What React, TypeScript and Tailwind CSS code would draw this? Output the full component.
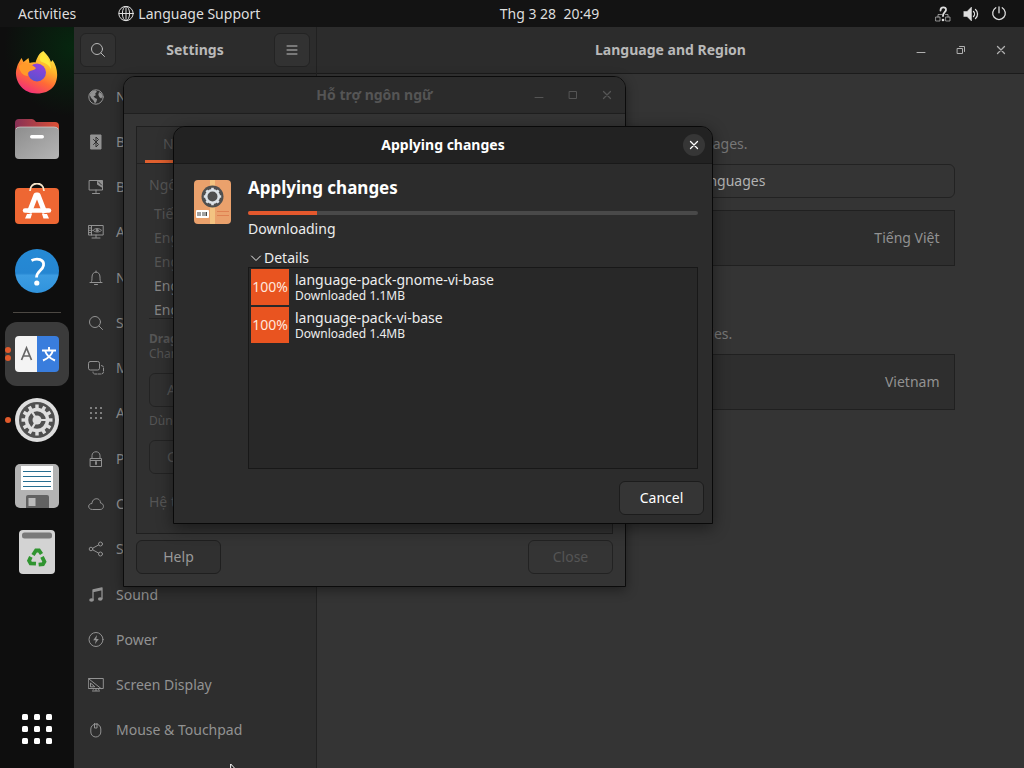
import type { ReactNode } from "react";

function Icon({ children, className = "size-4" }: { children: ReactNode; className?: string }) {
  return (
    <svg viewBox="0 0 16 16" fill="none" stroke="currentColor" strokeWidth="1" strokeLinecap="round" strokeLinejoin="round" className={`shrink-0 ${className}`} aria-hidden="true">
      {children}
    </svg>
  );
}

const search = (
  <>
    <circle cx="7" cy="7" r="5.5" />
    <path d="M11 11l3.5 3.5" />
  </>
);

const sections: { label: string; icon: ReactNode }[] = [
  {
    label: "Network",
    icon: (
      <>
        <circle cx="8" cy="8" r="7.2" />
        <path d="M1.5 5.5L4 2.2l3.5-1L9 2.8 7.2 4.4l.6 1.8L5.5 7.5l1.6 1.6 2 .9-.6 2.5L7 14.5l-1.5-3-2.4-2.4z M11 3l2.6 1.4 1.1 3-1.6 2.2-1.8-1.7-1-2.2z" fill="currentColor" stroke="none" />
      </>
    ),
  },
  {
    label: "Bluetooth",
    icon: (
      <>
        <path d="M3 1h10v14H3z" fill="currentColor" stroke="currentColor" />
        <path d="M5.500 5.500l5 5L8 13V3l2.500 2.500-5 5" stroke="#2e2e2e" />
      </>
    ),
  },
  {
    label: "Background",
    icon: (
      <>
        <path d="M1.500 1.500h13v9.500h-13zM8 11v2.500M4.500 14.500h7" />
        <path d="M9 1.500v4l5.500 3.500V1.500z" fill="currentColor" stroke="none" />
        <path d="M10.500 3l3 3" stroke="#2e2e2e" />
      </>
    ),
  },
  {
    label: "Appearance",
    icon: (
      <>
        <path d="M.8 1.500h14.400v9.500H.8zM3.500 1.500v9.500M8 11v2.500M4 14h8M1 4h2M1 6.300h2M1 8.600h2" />
        <path d="M5 6.300c1.500-2.300 6.500-2.300 8.500 0-2 2.300-7 2.300-8.500 0z" />
        <circle cx="9.200" cy="6.300" r="1" fill="currentColor" />
      </>
    ),
  },
  {
    label: "Notifications",
    icon: <path d="M8 1v1M2 12.500h12M3 12.500c1-1.500 1-2.500 1-5.500 0-6.500 8-6.500 8 0 0 3 0 4 1 5.500M6.500 14.500h3" />,
  },
  { label: "Search", icon: search },
  {
    label: "Multitasking",
    icon: (
      <>
        <rect x="0.500" y="1.500" width="11" height="8.500" rx="1.800" />
        <path d="M13.500 5.500q2 0 2 2v4.500q0 2-2 2H7q-2 0-2-2" strokeDasharray="2.500 1.200" />
      </>
    ),
  },
  {
    label: "Applications",
    icon: <path d="M3 3h0M8 3h0M13 3h0M3 8h0M8 8h0M13 8h0M3 13h0M8 13h0M13 13h0" strokeWidth="2.200" />,
  },
  {
    label: "Privacy",
    icon: (
      <>
        <path d="M2.500 7.500h11v8h-11zM4 7.500V4.500c0-5 8-5 8 0v3M2.500 9.500h11" />
        <path d="M8 11v2" strokeWidth="1.800" />
      </>
    ),
  },
  {
    label: "Online Accounts",
    icon: <path d="M4 13.500c-4.500 0-4.500-6 0-6 0-6 8.500-6.500 8.500-.5 4 .5 4 6.500 0 6.500z" />,
  },
  {
    label: "Sharing",
    icon: (
      <>
        <circle cx="3" cy="8" r="1.800" />
        <circle cx="12.500" cy="3" r="2" />
        <circle cx="12.500" cy="13" r="2" />
        <path d="M5 7l5.500-3M5 9l5.500 3" />
      </>
    ),
  },
  {
    label: "Sound",
    icon: (
      <>
        <path d="M5 13V3l9-2v10.500M5 4.500l9-2" strokeWidth="1.300" />
        <ellipse cx="3.500" cy="13" rx="2.300" ry="1.800" fill="currentColor" stroke="none" />
        <ellipse cx="12.200" cy="12" rx="2.300" ry="1.800" fill="currentColor" stroke="none" />
      </>
    ),
  },
  {
    label: "Power",
    icon: (
      <>
        <circle cx="8" cy="7.500" r="7" />
        <path d="M9 3L5.200 8.200h2.500L7 12l3.800-5H8.300z" fill="currentColor" stroke="none" />
      </>
    ),
  },
  {
    label: "Screen Display",
    icon: (
      <>
        <path d="M.7 1.500h14.600v10H.7zM8 11.500v2M4.500 14h7M1 2l12 9.500" />
        <path d="M2.500 9.500V6l4 3.500zM5 12.500l1-1h4l1 1.500" />
      </>
    ),
  },
  {
    label: "Mouse & Touchpad",
    icon: (
      <>
        <rect x="2.800" y="2" width="10" height="13" rx="5" />
        <path d="M6.500 1.500v4.500h2.500V1.500" />
      </>
    ),
  },
];

function Minimize() {
  return (
    <Icon>
      <path d="M4 10.500h8" />
    </Icon>
  );
}

function Cross({ className }: { className?: string }) {
  return (
    <Icon className={className}>
      <path d="M4.500 4.500l7 7M11.500 4.500l-7 7" strokeWidth="1.300" />
    </Icon>
  );
}

function TopBar() {
  return (
    <header className="grid h-[27px] shrink-0 grid-cols-[1fr_auto_1fr] items-center bg-[#131313] text-sm text-[#dedede]">
      <div className="flex items-center gap-[42px] pl-[18px]">
        <button type="button">Activities</button>
        <button type="button" className="flex items-center gap-1">
          <Icon>
            <circle cx="8" cy="7.500" r="7.200" />
            <ellipse cx="8" cy="7.500" rx="3.600" ry="7.200" />
            <path d="M8 .5v14M1 7.500h14" />
          </Icon>
          Language Support
        </button>
      </div>
      <button type="button" className="pl-[75px]">Thg 3 28&nbsp; 20:49</button>
      <div className="flex items-center justify-end gap-3 pr-[17px]">
        <Icon>
          <g opacity=".6">
            <path d="M1 11h4v4H1zM11 11h4v4h-4zM3 11V8.500h3.500M13 11V8.500h-2.500" />
          </g>
          <path d="M5.500 4.500c0-4 6-4 5.500-.5-.3 2.300-3 2.500-3 6" strokeWidth="1.800" />
          <circle cx="8" cy="14" r="1.300" fill="currentColor" stroke="none" />
        </Icon>
        <Icon>
          <path d="M1 5.500h3L8.500 1v14L4 10.500H1z" fill="currentColor" strokeWidth=".5" />
          <path d="M10.500 5.500c1.300 1.300 1.300 3.700 0 5M12.500 3.500c2.700 2.300 2.700 6.700 0 9" strokeWidth="1.300" />
        </Icon>
        <Icon>
          <path d="M8 .8v6M4.800 1.800a6.300 6.300 0 1 0 6.400 0" strokeWidth="1.300" />
        </Icon>
      </div>
    </header>
  );
}

function Firefox() {
  return (
    <svg viewBox="0 0 44 46" className="h-[46px] w-11" aria-hidden="true">
      <defs>
        <linearGradient id="fire" x1=".8" y1="0" x2=".3" y2="1">
          <stop offset="0" stopColor="#fff44f" />
          <stop offset=".35" stopColor="#ffb52a" />
          <stop offset=".65" stopColor="#ff6a36" />
          <stop offset="1" stopColor="#f02d7c" />
        </linearGradient>
        <linearGradient id="globe" x1=".7" y1="0" x2=".3" y2="1">
          <stop offset="0" stopColor="#9641dc" />
          <stop offset="1" stopColor="#5951cf" />
        </linearGradient>
      </defs>
      <path d="M28.300 1C32 5 35 8 36 12l1.500-2C46 22 44 43.500 22 43.500 5 43.500-2 27 2 17c1-4 3-6 4.500-9l2 4 5-4 1 5c2-.5 4-1 6-.5C22 8 24 3 28.300 1z" fill="url(#fire)" />
      <circle cx="22" cy="22.500" r="9" fill="url(#globe)" />
      <path d="M4 16c4-4 8-3 11-1 2-.5 4 1 6 3-1 2-4 2-6 3-2 1-3 3-2 5-5 0-9-5-9-10z" fill="#ff9a29" />
      <path d="M28 3c5 5 8 10 8 16-2-4-5-6-9-7-3-1-3-6 1-9z" fill="#ffe93c" />
    </svg>
  );
}

function Files() {
  return (
    <svg viewBox="0 0 44 42" className="h-[42px] w-11" aria-hidden="true">
      <defs>
        <linearGradient id="folder" x1="0" x2="1">
          <stop offset="0" stopColor="#873055" />
          <stop offset="1" stopColor="#dc5136" />
        </linearGradient>
        <linearGradient id="front" x1="0" y1="0" x2="1" y2="1">
          <stop offset="0" stopColor="#8d8d8d" />
          <stop offset="1" stopColor="#b5b5b5" />
        </linearGradient>
      </defs>
      <path d="M0 15V5q0-4 4-4h13q2 0 4 3h19q4 0 4 4v8z" fill="url(#folder)" />
      <rect y="9" width="44" height="32" rx="4" fill="url(#front)" />
      <path d="M1 11q1-2 4-2h34q3 0 4 2" stroke="#d7d0cd" strokeWidth=".7" fill="none" />
      <rect x="15" y="17" width="14" height="3.500" rx="1.700" fill="#fff" />
    </svg>
  );
}

function Software() {
  return (
    <svg viewBox="0 0 44 44" className="size-11" aria-hidden="true">
      <rect y="5" width="44" height="36" rx="4" fill="#ee6733" />
      <path d="M15 8c0-10 14-10 14 0" stroke="#f7e6cc" strokeWidth="1.800" fill="none" />
      <path d="M14 30l7-18h2l7 18" fill="none" stroke="#fff" strokeWidth="5" strokeLinejoin="round" />
      <path d="M10 27.500h24" stroke="#fff" strokeWidth="4.500" strokeLinecap="round" />
      <path d="M12 31h5l-1.500 4.500H10zM27 31h5l2 4.500h-5.500z" fill="#fff" />
    </svg>
  );
}

function Help() {
  return (
    <svg viewBox="0 0 44 44" className="size-11" aria-hidden="true">
      <defs>
        <linearGradient id="ask" x1="0" y1="0" x2="0" y2="1">
          <stop offset="0" stopColor="#258ad5" />
          <stop offset=".55" stopColor="#2586d2" />
          <stop offset=".6" stopColor="#3c9ce2" />
          <stop offset="1" stopColor="#3093dd" />
        </linearGradient>
      </defs>
      <circle cx="22" cy="22" r="22" fill="url(#ask)" />
      <path d="M16.500 11.500c6-3 13-1 12 5-.8 5-7 5.500-7 12" fill="none" stroke="#fff" strokeWidth="2.800" />
      <circle cx="21.800" cy="34" r="2.600" fill="#fff" />
    </svg>
  );
}

function Translate() {
  return (
    <svg viewBox="0 0 44 36" className="h-9 w-11" aria-hidden="true">
      <path d="M4 0h18v36H4q-4 0-4-4V4q0-4 4-4z" fill="#f4f4f4" />
      <path d="M22 0h18q4 0 4 4v28q0 4-4 4H22z" fill="#397ddd" />
      <path d="M6.500 24l5-12 5 12M8.300 20h6.500" fill="none" stroke="#666" strokeWidth="1.700" />
      <path d="M27 14.500h14M34 11v3.500M38 14.500c-1.500 5-5 8-10 10M30 14.500c1.500 5 5 8 10 10" fill="none" stroke="#fff" strokeWidth="1.900" />
    </svg>
  );
}

const spokes = [0, 30, 60, 90, 120, 150, 180, 210, 240, 270, 300, 330];

function Gear() {
  return (
    <svg viewBox="0 0 44 44" className="size-11" aria-hidden="true">
      <circle cx="22" cy="22" r="22" fill="#dedede" />
      <circle cx="22" cy="22" r="18" fill="#505050" />
      <g fill="none" stroke="#dedede">
        <circle cx="22" cy="22" r="10.500" strokeWidth="3.500" />
        {spokes.map((a) => (
          <path key={a} d="M22 10.500V6.500" strokeWidth="3.400" transform={`rotate(${a} 22 22)`} />
        ))}
        <path d="M22 22h11M22 22l-6-10M22 22l-6 10" strokeWidth="2.200" />
      </g>
      <circle cx="22" cy="22" r="4.500" fill="#dedede" />
    </svg>
  );
}

function Floppy() {
  return (
    <svg viewBox="0 0 44 44" className="size-11" aria-hidden="true">
      <rect width="44" height="44" rx="5" fill="#b3b3b3" />
      <path d="M6 2h32v24H6z" fill="#fff" />
      <path d="M8 7.500h28M8 12.500h28M8 17.500h28M8 22.500h28" stroke="#266e91" strokeWidth="1.200" />
      <path d="M11 44V33q0-2 2-2h19q2 0 2 2v11z" fill="#626262" />
      <rect x="13.500" y="34" width="7" height="8" fill="#bbb" />
    </svg>
  );
}

function Trash() {
  return (
    <svg viewBox="0 0 36 44" className="h-11 w-9" aria-hidden="true">
      <rect width="36" height="44" rx="4" fill="#d3d3d3" />
      <rect x="3" y="2.500" width="30" height="6" rx="2.500" fill="#797979" />
      <g fill="none" stroke="#2f942f" strokeWidth="3.800">
        <path d="M14 25l3-4.500h3l2.500 3.500" />
        <path d="M14 25l3-4.500h3l2.500 3.500" transform="rotate(120 18 28.500)" />
        <path d="M14 25l3-4.500h3l2.500 3.500" transform="rotate(240 18 28.500)" />
      </g>
    </svg>
  );
}

function DockItem({ label, children, active, dots = 0 }: { label: string; children: ReactNode; active?: boolean; dots?: number }) {
  return (
    <button type="button" aria-label={label} className={`relative grid size-16 shrink-0 place-items-center rounded-xl ${active ? "bg-[#3b3b3b]" : ""}`}>
      {children}
      {dots > 0 && (
        <span className="absolute inset-y-0 left-0 flex flex-col justify-center gap-0.5">
          {Array.from({ length: dots }, (_, i) => (
            <span key={i} className="size-1.5 rounded-full bg-[#e05a2b]" />
          ))}
        </span>
      )}
    </button>
  );
}

function Dock() {
  return (
    <nav aria-label="Dock" className="flex w-[74px] shrink-0 flex-col items-center bg-[#0e0e0e] bg-[radial-gradient(circle_at_100%_20px,#06270f_0,#0e0e0e_70px)] pb-[7px]">
      <div className="flex flex-col items-center gap-0.5 pt-[14px]">
        <DockItem label="Firefox"><Firefox /></DockItem>
        <DockItem label="Files"><Files /></DockItem>
        <DockItem label="Software"><Software /></DockItem>
        <DockItem label="Help"><Help /></DockItem>
      </div>
      <span className="my-[9px] h-px w-12 shrink-0 bg-[#4c4843]" />
      <div className="flex flex-col items-center gap-0.5">
        <DockItem label="Language Support" active dots={2}><Translate /></DockItem>
        <DockItem label="Settings" dots={1}><Gear /></DockItem>
        <DockItem label="Save"><Floppy /></DockItem>
        <DockItem label="Trash"><Trash /></DockItem>
      </div>
      <div className="mt-auto">
        <DockItem label="Show Applications">
          <svg viewBox="0 0 30 30" className="size-[30px]" fill="#fff" aria-hidden="true">
            {[0, 12, 24].map((y) => [0, 12, 24].map((x) => <rect key={`${x}-${y}`} x={x} y={y} width="6" height="6" rx="1.500" />))}
          </svg>
        </DockItem>
      </div>
    </nav>
  );
}

function Sidebar() {
  return (
    <aside className="flex w-[243px] shrink-0 flex-col border-r border-[#212121] bg-[#2e2e2e]">
      <div className="flex h-[47px] shrink-0 items-center justify-between border-b border-[#1b1b1b] bg-[#2c2c2c] px-1.5">
        <button type="button" aria-label="Search" className="grid size-9 h-[34px] place-items-center rounded-md border border-[#232323] bg-[#313131] text-[#b8b8b8]">
          <Icon>{search}</Icon>
        </button>
        <h2 className="text-sm font-bold text-[#b9b9b9]">Settings</h2>
        <button type="button" aria-label="Menu" className="grid size-9 h-[34px] place-items-center rounded-md border border-[#232323] bg-[#323232] text-[#c0c0c0]">
          <Icon><path d="M3 4h10M3 8h10M3 12h10" /></Icon>
        </button>
      </div>
      <ul className="grid min-h-0 flex-1 auto-rows-fr pb-[15px] text-sm text-[#929292]">
        {sections.map((s) => (
          <li key={s.label} className="flex min-h-0">
            <a href="#" className="flex flex-1 items-center gap-3 pl-[14px]">
              <Icon>{s.icon}</Icon>
              {s.label}
            </a>
          </li>
        ))}
      </ul>
    </aside>
  );
}

function Region({ title, note, action, name, value }: { title: string; note: string; action?: string; name: string; value: string }) {
  return (
    <section className="flex flex-col">
      <h3 className="font-bold leading-5 text-[#a5a5a5]">{title}</h3>
      <p className="mt-1 leading-5 text-[#777]">{note}</p>
      {action && (
        <button type="button" className="mt-[10px] h-[34px] rounded-md border border-[#222] text-[#b2b2b2]">{action}</button>
      )}
      <button type="button" className={`flex h-14 items-center justify-between border border-[#202020] bg-[#2e2e2e] px-[14px] text-[#929292] ${action ? "mt-3" : "mt-[10px]"}`}>
        <span>{name}</span>
        <span>{value}</span>
      </button>
    </section>
  );
}

function RegionPage() {
  return (
    <main className="flex min-w-0 flex-1 flex-col bg-[#343434]">
      <div className="grid h-[47px] shrink-0 grid-cols-[1fr_auto_1fr] items-center border-b border-[#1b1b1b] bg-[#2c2c2c]">
        <h1 className="col-start-2 text-sm font-bold text-[#b9b9b9]">Language and Region</h1>
        <div className="flex items-center justify-end gap-6 pr-[15px] text-[#b0b0b0]">
          <button type="button" aria-label="Minimize"><Minimize /></button>
          <button type="button" aria-label="Restore">
            <Icon><path d="M4.500 6.500h5v5h-5zM6.500 4.500h5v5" /></Icon>
          </button>
          <button type="button" aria-label="Close settings"><Cross /></button>
        </div>
      </div>
      <div className="mx-auto flex w-full max-w-[568px] flex-1 flex-col gap-[34px] pt-9 text-sm">
        <Region title="Language" note="The language used for text in windows and web pages." action="Manage Installed Languages" name="Language" value="Tiếng Việt" />
        <Region title="Formats" note="The format used for numbers, dates, and currencies." name="Formats" value="Vietnam" />
      </div>
    </main>
  );
}

function LanguageWindow() {
  return (
    <section aria-label="Hỗ trợ ngôn ngữ" className="absolute left-[123px] top-[76px] flex h-[511px] w-[503px] flex-col overflow-hidden rounded-t-xl border border-[#0b0b0b] bg-[#343434] text-sm text-[#555] shadow-[0_3px_12px_rgba(0,0,0,0.4)]">
      <div className="grid h-[37px] shrink-0 grid-cols-[1fr_auto_1fr] items-center border-b border-[#1f1f1f] bg-[#2b2b2b]">
        <h2 className="col-start-2 font-bold">Hỗ trợ ngôn ngữ</h2>
        <div className="flex items-center justify-end gap-[18px] pr-[10px]">
          <button type="button" aria-label="Minimize language window"><Minimize /></button>
          <button type="button" aria-label="Maximize language window"><Icon><path d="M4.500 4.500h7v7h-7z" /></Icon></button>
          <button type="button" aria-label="Close language window"><Cross /></button>
        </div>
      </div>
      <div className="flex flex-1 flex-col p-3">
        <div className="flex flex-1 flex-col border border-[#1f1f1f] bg-[#303030]">
          <div className="flex h-[37px] border-b border-[#222] px-2">
            <button type="button" className="border-b-[3px] border-[#e0602f] px-[18px]">Ngôn ngữ</button>
          </div>
          <div className="flex flex-1 flex-col items-start px-3 pt-[11px]">
            <h3 className="leading-5">Ngôn ngữ</h3>
            <ul className="h-[124px] w-full overflow-hidden border-b border-[#222] pl-[5px] pt-[7px] leading-6">
              <li>Tiếng Việt</li>
              <li>English (US)</li>
              <li>English</li>
              <li className="text-[#858585]">English (AU)</li>
              <li className="text-[#858585]">English (CA)</li>
            </ul>
            <p className="mt-3 text-xs font-bold leading-[15px]">Drag to arrange</p>
            <p className="text-xs leading-[15px]">Changes apply</p>
            <button type="button" disabled className="mt-3 h-[34px] rounded-md border border-[#232323] px-[17px]">Apply</button>
            <p className="mt-1 text-xs leading-5">Dùng cùng</p>
            <button type="button" disabled className="mt-[9px] h-[34px] rounded-md border border-[#232323] px-[17px]">Cài đặt</button>
            <p className="mt-4 leading-6">Hệ thống</p>
          </div>
        </div>
        <div className="mt-1.5 flex justify-between">
          <button type="button" className="h-[34px] w-[85px] rounded-md border border-[#1f1f1f] bg-[#303030] text-[#999]">Help</button>
          <button type="button" disabled className="h-[34px] w-[85px] rounded-md border border-[#222]">Close</button>
        </div>
      </div>
    </section>
  );
}

function PackageIcon() {
  return (
    <svg viewBox="0 0 37 44" className="mt-[16px] h-11 w-[37px] shrink-0" aria-hidden="true">
      <rect width="37" height="44" rx="4" fill="#eaa16c" />
      <path d="M16 0h5v44h-5z" fill="#f3c381" />
      <circle cx="18.500" cy="16.500" r="11" fill="#4f4f4f" />
      <g stroke="#dce2e7" fill="none">
        <circle cx="18.500" cy="16.500" r="6.300" strokeWidth="2.600" />
        {[0, 45, 90, 135, 180, 225, 270, 315].map((a) => (
          <path key={a} d="M18.500 10V7.800" strokeWidth="2.600" transform={`rotate(${a} 18.500 16.500)`} />
        ))}
      </g>
      <rect x="2" y="30" width="13" height="8" rx="1" fill="#fff" />
      <path d="M4 32v4M6 32v4M9 32v4M11 32v4M12.500 32v4" stroke="#444" strokeWidth="1" />
      <path d="M23 31.500h12M23 35.500h12" stroke="#dc784b" strokeWidth=".8" />
    </svg>
  );
}

const packages = [
  { name: "language-pack-gnome-vi-base", size: "1.1MB" },
  { name: "language-pack-vi-base", size: "1.4MB" },
];

function ProgressDialog() {
  return (
    <section role="dialog" aria-label="Applying changes" className="absolute left-[173px] top-[126px] flex w-[540px] flex-col overflow-hidden rounded-t-xl border border-[#090909] bg-[#2c2c2c] text-sm text-[#ededed] shadow-[0_4px_16px_rgba(0,0,0,0.45)]">
      <div className="grid h-[37px] grid-cols-[1fr_auto_1fr] items-center border-b border-[#191919] bg-[#222]">
        <h2 className="col-start-2 font-bold text-white">Applying changes</h2>
        <button type="button" aria-label="Close dialog" className="mr-[7px] grid size-[22px] place-items-center justify-self-end rounded-full bg-[#363636] text-white">
          <Cross className="size-4" />
        </button>
      </div>
      <div className="flex gap-[17px] pl-5 pr-[14px]">
        <PackageIcon />
        <div className="flex min-w-0 flex-1 flex-col">
          <h3 className="mt-[10px] text-[17px] font-bold leading-7 text-white">Applying changes</h3>
          <div role="progressbar" aria-label="Progress" aria-valuenow={15} className="mt-[9px] h-1 overflow-hidden rounded-full bg-[#494949]">
            <div className="h-full w-[15.4%] bg-[#e4582d]" />
          </div>
          <p className="mt-1 text-sm leading-5">Downloading</p>
          <button type="button" className="mt-[10px] flex items-center text-sm leading-[18px]">
            <Icon><path d="M3.500 6l4.500 4.500L12.500 6" /></Icon>
            Details
          </button>
          <ul className="flex h-[202px] flex-col gap-0.5 border border-[#181818] bg-[#282828] p-px pl-0.5">
            {packages.map((p) => (
              <li key={p.name} className="flex gap-1.5">
                <span className="grid h-9 w-[38px] shrink-0 place-items-center bg-[#e95420] text-sm text-[#ffe6db]">100%</span>
                <span className="flex flex-col pt-[2px]">
                  <span className="text-sm leading-[18px]">{p.name}</span>
                  <span className="text-xs leading-[14px]">Downloaded {p.size}</span>
                </span>
              </li>
            ))}
          </ul>
        </div>
      </div>
      <button type="button" className="mb-2 mr-2 mt-3 h-[34px] w-[85px] self-end rounded-md border border-[#1c1c1c] bg-[#353535] text-white">Cancel</button>
    </section>
  );
}

export default function App() {
  return (
    <div className="relative flex h-screen flex-col overflow-hidden bg-[#131313] font-['Noto_Sans',sans-serif]">
      <TopBar />
      <div className="flex min-h-0 flex-1">
        <Dock />
        <Sidebar />
        <RegionPage />
      </div>
      <LanguageWindow />
      <ProgressDialog />
      <svg viewBox="0 0 12 18" className="absolute left-[230px] top-[763px] h-[18px] w-3" aria-hidden="true">
        <path d="M.7 1v14l3.500-3.500L10 11z" fill="#111" stroke="#fff" />
      </svg>
    </div>
  );
}
